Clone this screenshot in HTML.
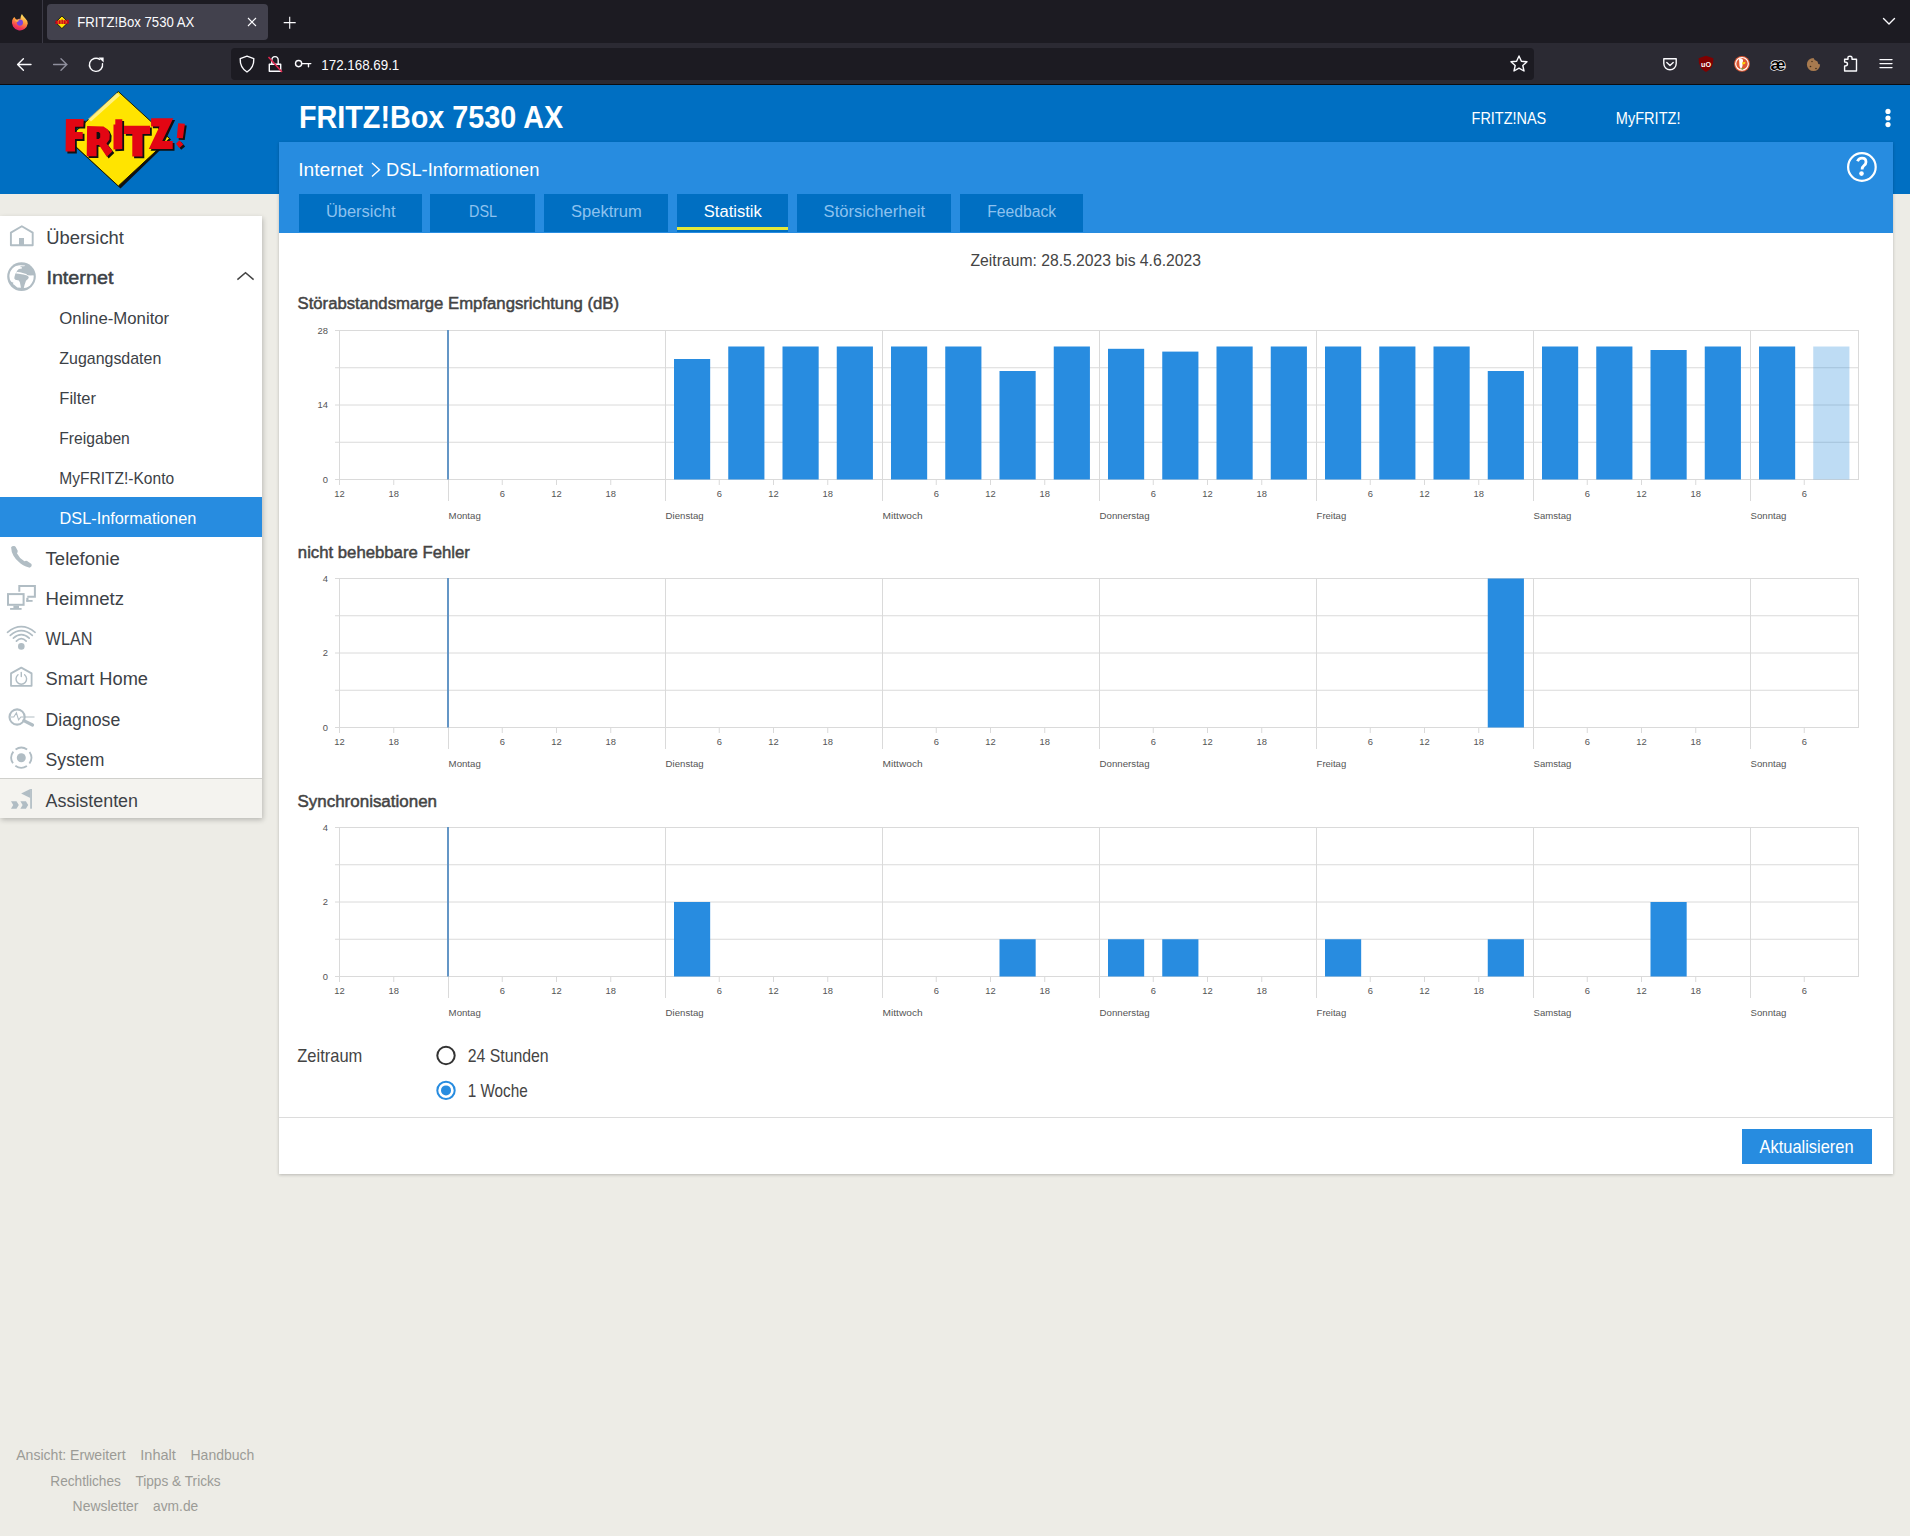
<!DOCTYPE html>
<html><head><meta charset="utf-8"><title>FRITZ!Box 7530 AX</title>
<style>
html,body{margin:0;padding:0;}
body{width:1910px;height:1536px;overflow:hidden;position:relative;background:#edece6;font-family:"Liberation Sans",sans-serif;}
.a{position:absolute;}
svg text{font-family:"Liberation Sans",sans-serif;}
</style></head><body>
<div class="a" style="left:0;top:0;width:1910px;height:43px;background:#1c1b22"></div>
<div class="a" style="left:42px;top:0;width:1px;height:43px;background:#3a3944"></div>
<div class="a" style="left:47px;top:4px;width:221px;height:36px;background:#42414d;border-radius:4px"></div>
<div class="a" style="left:0;top:43px;width:1910px;height:41px;background:#2b2a33"></div>
<div class="a" style="left:231px;top:48px;width:1303px;height:32px;background:#1c1b22;border-radius:4px"></div>
<div class="a" style="left:0;top:84px;width:1910px;height:1px;background:#0c0c10"></div>
<div class="a" style="left:0;top:85px;width:1910px;height:109px;background:#006fc2"></div>
<div class="a" style="left:0;top:216px;width:262px;height:602px;background:#fff;box-shadow:1px 2px 5px rgba(0,0,0,0.22)"></div>
<div class="a" style="left:0;top:497px;width:262px;height:40px;background:#278ce0"></div>
<div class="a" style="left:0;top:778px;width:262px;height:39px;background:#f4f3ef;border-top:1px solid #d0d0cc"></div>
<div class="a" style="left:279px;top:142px;width:1614px;height:1032px;background:#fff;box-shadow:0 1px 3px rgba(0,0,0,0.22)"></div>
<div class="a" style="left:279px;top:142px;width:1614px;height:91px;background:#278ce0"></div>
<div class="a" style="left:299px;top:194px;width:123px;height:38px;background:#006fc2"></div>
<div class="a" style="left:430px;top:194px;width:105px;height:38px;background:#006fc2"></div>
<div class="a" style="left:544px;top:194px;width:124px;height:38px;background:#006fc2"></div>
<div class="a" style="left:677px;top:194px;width:111px;height:38px;background:#006fc2"></div>
<div class="a" style="left:677px;top:227px;width:111px;height:3px;background:#e3e83a"></div>
<div class="a" style="left:797px;top:194px;width:154px;height:38px;background:#006fc2"></div>
<div class="a" style="left:960px;top:194px;width:123px;height:38px;background:#006fc2"></div>
<div class="a" style="left:279px;top:1117px;width:1614px;height:1px;background:#dcdcdc"></div>
<div class="a" style="left:1742px;top:1129px;width:130px;height:35px;background:#278ce0"></div>
<svg class="a" style="left:0;top:0" width="1910" height="1536" viewBox="0 0 1910 1536">
<text x="77.30" y="26.70" font-size="13.81" fill="#fbfbfe" textLength="117.00" lengthAdjust="spacingAndGlyphs">FRITZ!Box 7530 AX</text>
<text x="321.30" y="69.90" font-size="14.83" fill="#fbfbfe" textLength="78.00" lengthAdjust="spacingAndGlyphs">172.168.69.1</text>
<text x="298.90" y="127.60" font-size="30.81" font-weight="bold" fill="#ffffff" textLength="264.40" lengthAdjust="spacingAndGlyphs">FRITZ!Box 7530 AX</text>
<text x="1471.60" y="123.60" font-size="16.57" fill="#ffffff" textLength="74.60" lengthAdjust="spacingAndGlyphs">FRITZ!NAS</text>
<text x="1615.80" y="123.60" font-size="16.57" fill="#ffffff" textLength="64.70" lengthAdjust="spacingAndGlyphs">MyFRITZ!</text>
<text x="298.20" y="175.90" font-size="18.90" fill="#ffffff" textLength="65.00" lengthAdjust="spacingAndGlyphs">Internet</text>
<text x="386.00" y="175.90" font-size="18.90" fill="#ffffff" textLength="153.40" lengthAdjust="spacingAndGlyphs">DSL-Informationen</text>
<path d="M372 163 L379.5 169.7 L372 176.5" fill="none" stroke="#fff" stroke-width="1.4"/>
<text x="325.90" y="216.90" font-size="17.30" fill="#8dc2ef" textLength="69.60" lengthAdjust="spacingAndGlyphs">Übersicht</text>
<text x="469.00" y="216.90" font-size="17.30" fill="#8dc2ef" textLength="28.00" lengthAdjust="spacingAndGlyphs">DSL</text>
<text x="571.00" y="216.90" font-size="17.30" fill="#8dc2ef" textLength="70.80" lengthAdjust="spacingAndGlyphs">Spektrum</text>
<text x="703.80" y="216.90" font-size="17.30" fill="#ffffff" textLength="58.00" lengthAdjust="spacingAndGlyphs">Statistik</text>
<text x="823.60" y="216.90" font-size="17.30" fill="#8dc2ef" textLength="101.40" lengthAdjust="spacingAndGlyphs">Störsicherheit</text>
<text x="987.20" y="216.90" font-size="17.30" fill="#8dc2ef" textLength="69.00" lengthAdjust="spacingAndGlyphs">Feedback</text>
<text x="970.50" y="265.70" font-size="16.72" fill="#444444" textLength="230.50" lengthAdjust="spacingAndGlyphs">Zeitraum: 28.5.2023 bis 4.6.2023</text>
<text x="297.50" y="308.70" font-size="16.86" stroke="#444444" stroke-width="0.5" fill="#444444" textLength="321.50" lengthAdjust="spacingAndGlyphs">Störabstandsmarge Empfangsrichtung (dB)</text>
<text x="297.85" y="557.80" font-size="16.86" stroke="#444444" stroke-width="0.5" fill="#444444" textLength="172.00" lengthAdjust="spacingAndGlyphs">nicht behebbare Fehler</text>
<text x="297.50" y="806.80" font-size="16.86" stroke="#444444" stroke-width="0.5" fill="#444444" textLength="139.50" lengthAdjust="spacingAndGlyphs">Synchronisationen</text>
<text x="297.30" y="1061.80" font-size="17.59" fill="#444444" textLength="65.00" lengthAdjust="spacingAndGlyphs">Zeitraum</text>
<text x="467.70" y="1061.80" font-size="17.59" fill="#444444" textLength="81.00" lengthAdjust="spacingAndGlyphs">24 Stunden</text>
<text x="467.70" y="1096.60" font-size="17.59" fill="#444444" textLength="60.00" lengthAdjust="spacingAndGlyphs">1 Woche</text>
<text x="1759.60" y="1152.90" font-size="17.59" fill="#ffffff" textLength="94.00" lengthAdjust="spacingAndGlyphs">Aktualisieren</text>
<circle cx="446" cy="1055.5" r="8.7" fill="#fff" stroke="#333" stroke-width="2"/>
<circle cx="446" cy="1090.4" r="8.7" fill="#fff" stroke="#278ce0" stroke-width="2"/>
<circle cx="446" cy="1090.4" r="5" fill="#278ce0"/>
<text x="46.30" y="243.80" font-size="18.90" fill="#3c4146" textLength="77.60" lengthAdjust="spacingAndGlyphs">Übersicht</text>
<text x="46.40" y="284.06" font-size="18.90" stroke="#3c4146" stroke-width="0.5" fill="#3c4146" textLength="67.00" lengthAdjust="spacingAndGlyphs">Internet</text>
<text x="59.30" y="323.80" font-size="17.15" fill="#3c4146" textLength="109.90" lengthAdjust="spacingAndGlyphs">Online-Monitor</text>
<text x="59.30" y="363.80" font-size="17.15" fill="#3c4146" textLength="102.00" lengthAdjust="spacingAndGlyphs">Zugangsdaten</text>
<text x="59.30" y="403.80" font-size="17.15" fill="#3c4146" textLength="36.70" lengthAdjust="spacingAndGlyphs">Filter</text>
<text x="59.30" y="443.90" font-size="17.15" fill="#3c4146" textLength="70.50" lengthAdjust="spacingAndGlyphs">Freigaben</text>
<text x="59.30" y="483.90" font-size="17.15" fill="#3c4146" textLength="114.80" lengthAdjust="spacingAndGlyphs">MyFRITZ!-Konto</text>
<text x="59.60" y="524.00" font-size="17.15" fill="#ffffff" textLength="136.70" lengthAdjust="spacingAndGlyphs">DSL-Informationen</text>
<text x="45.60" y="564.60" font-size="18.90" fill="#3c4146" textLength="74.20" lengthAdjust="spacingAndGlyphs">Telefonie</text>
<text x="45.60" y="604.70" font-size="18.90" fill="#3c4146" textLength="78.40" lengthAdjust="spacingAndGlyphs">Heimnetz</text>
<text x="45.60" y="644.80" font-size="18.90" fill="#3c4146" textLength="46.80" lengthAdjust="spacingAndGlyphs">WLAN</text>
<text x="45.60" y="685.00" font-size="18.90" fill="#3c4146" textLength="102.40" lengthAdjust="spacingAndGlyphs">Smart Home</text>
<text x="45.60" y="725.60" font-size="18.90" fill="#3c4146" textLength="74.70" lengthAdjust="spacingAndGlyphs">Diagnose</text>
<text x="45.60" y="765.70" font-size="18.90" fill="#3c4146" textLength="58.70" lengthAdjust="spacingAndGlyphs">System</text>
<text x="45.60" y="806.50" font-size="18.90" fill="#3c4146" textLength="92.40" lengthAdjust="spacingAndGlyphs">Assistenten</text>
<path d="M237.4 279.6 L245.5 272.8 L253.6 279.6" fill="none" stroke="#444" stroke-width="1.5"/>
<text x="16.20" y="1459.80" font-size="15.41" fill="#9b9b96" textLength="109.40" lengthAdjust="spacingAndGlyphs">Ansicht: Erweitert</text>
<text x="140.30" y="1459.80" font-size="15.41" fill="#9b9b96" textLength="35.60" lengthAdjust="spacingAndGlyphs">Inhalt</text>
<text x="190.50" y="1459.80" font-size="15.41" fill="#9b9b96" textLength="63.90" lengthAdjust="spacingAndGlyphs">Handbuch</text>
<text x="50.30" y="1485.80" font-size="15.41" fill="#9b9b96" textLength="70.60" lengthAdjust="spacingAndGlyphs">Rechtliches</text>
<text x="135.40" y="1485.80" font-size="15.41" fill="#9b9b96" textLength="85.30" lengthAdjust="spacingAndGlyphs">Tipps &amp; Tricks</text>
<text x="72.60" y="1510.90" font-size="15.41" fill="#9b9b96" textLength="65.90" lengthAdjust="spacingAndGlyphs">Newsletter</text>
<text x="153.10" y="1510.90" font-size="15.41" fill="#9b9b96" textLength="45.10" lengthAdjust="spacingAndGlyphs">avm.de</text>
<line x1="335" y1="330.50" x2="1859" y2="330.50" stroke="#dadada" stroke-width="1"/>
<line x1="335" y1="367.75" x2="1859" y2="367.75" stroke="#dadada" stroke-width="1"/>
<line x1="335" y1="405.00" x2="1859" y2="405.00" stroke="#dadada" stroke-width="1"/>
<line x1="335" y1="442.25" x2="1859" y2="442.25" stroke="#dadada" stroke-width="1"/>
<line x1="335" y1="479.50" x2="1859" y2="479.50" stroke="#dadada" stroke-width="1"/>
<rect x="674.00" y="359.00" width="36.17" height="120.50" fill="#288ce0"/>
<rect x="728.25" y="346.50" width="36.17" height="133.00" fill="#288ce0"/>
<rect x="782.50" y="346.50" width="36.17" height="133.00" fill="#288ce0"/>
<rect x="836.75" y="346.50" width="36.17" height="133.00" fill="#288ce0"/>
<rect x="891.00" y="346.50" width="36.17" height="133.00" fill="#288ce0"/>
<rect x="945.25" y="346.50" width="36.17" height="133.00" fill="#288ce0"/>
<rect x="999.50" y="371.00" width="36.17" height="108.50" fill="#288ce0"/>
<rect x="1053.75" y="346.50" width="36.17" height="133.00" fill="#288ce0"/>
<rect x="1108.00" y="348.80" width="36.17" height="130.70" fill="#288ce0"/>
<rect x="1162.25" y="351.60" width="36.17" height="127.90" fill="#288ce0"/>
<rect x="1216.50" y="346.50" width="36.17" height="133.00" fill="#288ce0"/>
<rect x="1270.75" y="346.50" width="36.17" height="133.00" fill="#288ce0"/>
<rect x="1325.00" y="346.50" width="36.17" height="133.00" fill="#288ce0"/>
<rect x="1379.25" y="346.50" width="36.17" height="133.00" fill="#288ce0"/>
<rect x="1433.50" y="346.50" width="36.17" height="133.00" fill="#288ce0"/>
<rect x="1487.75" y="371.00" width="36.17" height="108.50" fill="#288ce0"/>
<rect x="1542.00" y="346.50" width="36.17" height="133.00" fill="#288ce0"/>
<rect x="1596.25" y="346.50" width="36.17" height="133.00" fill="#288ce0"/>
<rect x="1650.50" y="350.00" width="36.17" height="129.50" fill="#288ce0"/>
<rect x="1704.75" y="346.50" width="36.17" height="133.00" fill="#288ce0"/>
<rect x="1759.00" y="346.50" width="36.17" height="133.00" fill="#288ce0"/>
<rect x="1813.25" y="346.50" width="36.17" height="133.00" fill="rgba(39,139,220,0.3)"/>
<line x1="339.5" y1="330" x2="339.5" y2="485" stroke="#dadada" stroke-width="1"/>
<line x1="1858.5" y1="330" x2="1858.5" y2="480" stroke="#dadada" stroke-width="1"/>
<line x1="448.5" y1="479" x2="448.5" y2="501" stroke="#dadada" stroke-width="1"/>
<rect x="447" y="330" width="2" height="149.5" fill="#6496c6"/>
<text x="448.60" y="519.00" font-size="9.60" fill="#555555" textLength="32.20" lengthAdjust="spacingAndGlyphs">Montag</text>
<line x1="665.5" y1="330" x2="665.5" y2="501" stroke="#dadada" stroke-width="1"/>
<text x="665.60" y="519.00" font-size="9.60" fill="#555555" textLength="38.00" lengthAdjust="spacingAndGlyphs">Dienstag</text>
<line x1="882.5" y1="330" x2="882.5" y2="501" stroke="#dadada" stroke-width="1"/>
<text x="882.60" y="519.00" font-size="9.60" fill="#555555" textLength="40.00" lengthAdjust="spacingAndGlyphs">Mittwoch</text>
<line x1="1099.5" y1="330" x2="1099.5" y2="501" stroke="#dadada" stroke-width="1"/>
<text x="1099.60" y="519.00" font-size="9.60" fill="#555555" textLength="50.00" lengthAdjust="spacingAndGlyphs">Donnerstag</text>
<line x1="1316.5" y1="330" x2="1316.5" y2="501" stroke="#dadada" stroke-width="1"/>
<text x="1316.60" y="519.00" font-size="9.60" fill="#555555" textLength="29.60" lengthAdjust="spacingAndGlyphs">Freitag</text>
<line x1="1533.5" y1="330" x2="1533.5" y2="501" stroke="#dadada" stroke-width="1"/>
<text x="1533.60" y="519.00" font-size="9.60" fill="#555555" textLength="37.70" lengthAdjust="spacingAndGlyphs">Samstag</text>
<line x1="1750.5" y1="330" x2="1750.5" y2="501" stroke="#dadada" stroke-width="1"/>
<text x="1750.60" y="519.00" font-size="9.60" fill="#555555" textLength="35.80" lengthAdjust="spacingAndGlyphs">Sonntag</text>
<text x="339.50" y="497.00" font-size="9.40" fill="#555555" text-anchor="middle">12</text>
<line x1="393.75" y1="479" x2="393.75" y2="485" stroke="#dadada" stroke-width="1"/>
<text x="393.75" y="497.00" font-size="9.40" fill="#555555" text-anchor="middle">18</text>
<line x1="502.25" y1="479" x2="502.25" y2="485" stroke="#dadada" stroke-width="1"/>
<text x="502.25" y="497.00" font-size="9.40" fill="#555555" text-anchor="middle">6</text>
<line x1="556.50" y1="479" x2="556.50" y2="485" stroke="#dadada" stroke-width="1"/>
<text x="556.50" y="497.00" font-size="9.40" fill="#555555" text-anchor="middle">12</text>
<line x1="610.75" y1="479" x2="610.75" y2="485" stroke="#dadada" stroke-width="1"/>
<text x="610.75" y="497.00" font-size="9.40" fill="#555555" text-anchor="middle">18</text>
<line x1="719.25" y1="479" x2="719.25" y2="485" stroke="#dadada" stroke-width="1"/>
<text x="719.25" y="497.00" font-size="9.40" fill="#555555" text-anchor="middle">6</text>
<line x1="773.50" y1="479" x2="773.50" y2="485" stroke="#dadada" stroke-width="1"/>
<text x="773.50" y="497.00" font-size="9.40" fill="#555555" text-anchor="middle">12</text>
<line x1="827.75" y1="479" x2="827.75" y2="485" stroke="#dadada" stroke-width="1"/>
<text x="827.75" y="497.00" font-size="9.40" fill="#555555" text-anchor="middle">18</text>
<line x1="936.25" y1="479" x2="936.25" y2="485" stroke="#dadada" stroke-width="1"/>
<text x="936.25" y="497.00" font-size="9.40" fill="#555555" text-anchor="middle">6</text>
<line x1="990.50" y1="479" x2="990.50" y2="485" stroke="#dadada" stroke-width="1"/>
<text x="990.50" y="497.00" font-size="9.40" fill="#555555" text-anchor="middle">12</text>
<line x1="1044.75" y1="479" x2="1044.75" y2="485" stroke="#dadada" stroke-width="1"/>
<text x="1044.75" y="497.00" font-size="9.40" fill="#555555" text-anchor="middle">18</text>
<line x1="1153.25" y1="479" x2="1153.25" y2="485" stroke="#dadada" stroke-width="1"/>
<text x="1153.25" y="497.00" font-size="9.40" fill="#555555" text-anchor="middle">6</text>
<line x1="1207.50" y1="479" x2="1207.50" y2="485" stroke="#dadada" stroke-width="1"/>
<text x="1207.50" y="497.00" font-size="9.40" fill="#555555" text-anchor="middle">12</text>
<line x1="1261.75" y1="479" x2="1261.75" y2="485" stroke="#dadada" stroke-width="1"/>
<text x="1261.75" y="497.00" font-size="9.40" fill="#555555" text-anchor="middle">18</text>
<line x1="1370.25" y1="479" x2="1370.25" y2="485" stroke="#dadada" stroke-width="1"/>
<text x="1370.25" y="497.00" font-size="9.40" fill="#555555" text-anchor="middle">6</text>
<line x1="1424.50" y1="479" x2="1424.50" y2="485" stroke="#dadada" stroke-width="1"/>
<text x="1424.50" y="497.00" font-size="9.40" fill="#555555" text-anchor="middle">12</text>
<line x1="1478.75" y1="479" x2="1478.75" y2="485" stroke="#dadada" stroke-width="1"/>
<text x="1478.75" y="497.00" font-size="9.40" fill="#555555" text-anchor="middle">18</text>
<line x1="1587.25" y1="479" x2="1587.25" y2="485" stroke="#dadada" stroke-width="1"/>
<text x="1587.25" y="497.00" font-size="9.40" fill="#555555" text-anchor="middle">6</text>
<line x1="1641.50" y1="479" x2="1641.50" y2="485" stroke="#dadada" stroke-width="1"/>
<text x="1641.50" y="497.00" font-size="9.40" fill="#555555" text-anchor="middle">12</text>
<line x1="1695.75" y1="479" x2="1695.75" y2="485" stroke="#dadada" stroke-width="1"/>
<text x="1695.75" y="497.00" font-size="9.40" fill="#555555" text-anchor="middle">18</text>
<line x1="1804.25" y1="479" x2="1804.25" y2="485" stroke="#dadada" stroke-width="1"/>
<text x="1804.25" y="497.00" font-size="9.40" fill="#555555" text-anchor="middle">6</text>
<text x="328.00" y="333.60" font-size="9.40" fill="#555555" text-anchor="end">28</text>
<text x="328.00" y="408.10" font-size="9.40" fill="#555555" text-anchor="end">14</text>
<text x="328.00" y="482.60" font-size="9.40" fill="#555555" text-anchor="end">0</text>
<line x1="335" y1="578.50" x2="1859" y2="578.50" stroke="#dadada" stroke-width="1"/>
<line x1="335" y1="615.75" x2="1859" y2="615.75" stroke="#dadada" stroke-width="1"/>
<line x1="335" y1="653.00" x2="1859" y2="653.00" stroke="#dadada" stroke-width="1"/>
<line x1="335" y1="690.25" x2="1859" y2="690.25" stroke="#dadada" stroke-width="1"/>
<line x1="335" y1="727.50" x2="1859" y2="727.50" stroke="#dadada" stroke-width="1"/>
<rect x="1487.75" y="578.50" width="36.17" height="149.00" fill="#288ce0"/>
<line x1="339.5" y1="578" x2="339.5" y2="733" stroke="#dadada" stroke-width="1"/>
<line x1="1858.5" y1="578" x2="1858.5" y2="728" stroke="#dadada" stroke-width="1"/>
<line x1="448.5" y1="727" x2="448.5" y2="749" stroke="#dadada" stroke-width="1"/>
<rect x="447" y="578" width="2" height="149.5" fill="#6496c6"/>
<text x="448.60" y="767.00" font-size="9.60" fill="#555555" textLength="32.20" lengthAdjust="spacingAndGlyphs">Montag</text>
<line x1="665.5" y1="578" x2="665.5" y2="749" stroke="#dadada" stroke-width="1"/>
<text x="665.60" y="767.00" font-size="9.60" fill="#555555" textLength="38.00" lengthAdjust="spacingAndGlyphs">Dienstag</text>
<line x1="882.5" y1="578" x2="882.5" y2="749" stroke="#dadada" stroke-width="1"/>
<text x="882.60" y="767.00" font-size="9.60" fill="#555555" textLength="40.00" lengthAdjust="spacingAndGlyphs">Mittwoch</text>
<line x1="1099.5" y1="578" x2="1099.5" y2="749" stroke="#dadada" stroke-width="1"/>
<text x="1099.60" y="767.00" font-size="9.60" fill="#555555" textLength="50.00" lengthAdjust="spacingAndGlyphs">Donnerstag</text>
<line x1="1316.5" y1="578" x2="1316.5" y2="749" stroke="#dadada" stroke-width="1"/>
<text x="1316.60" y="767.00" font-size="9.60" fill="#555555" textLength="29.60" lengthAdjust="spacingAndGlyphs">Freitag</text>
<line x1="1533.5" y1="578" x2="1533.5" y2="749" stroke="#dadada" stroke-width="1"/>
<text x="1533.60" y="767.00" font-size="9.60" fill="#555555" textLength="37.70" lengthAdjust="spacingAndGlyphs">Samstag</text>
<line x1="1750.5" y1="578" x2="1750.5" y2="749" stroke="#dadada" stroke-width="1"/>
<text x="1750.60" y="767.00" font-size="9.60" fill="#555555" textLength="35.80" lengthAdjust="spacingAndGlyphs">Sonntag</text>
<text x="339.50" y="745.00" font-size="9.40" fill="#555555" text-anchor="middle">12</text>
<line x1="393.75" y1="727" x2="393.75" y2="733" stroke="#dadada" stroke-width="1"/>
<text x="393.75" y="745.00" font-size="9.40" fill="#555555" text-anchor="middle">18</text>
<line x1="502.25" y1="727" x2="502.25" y2="733" stroke="#dadada" stroke-width="1"/>
<text x="502.25" y="745.00" font-size="9.40" fill="#555555" text-anchor="middle">6</text>
<line x1="556.50" y1="727" x2="556.50" y2="733" stroke="#dadada" stroke-width="1"/>
<text x="556.50" y="745.00" font-size="9.40" fill="#555555" text-anchor="middle">12</text>
<line x1="610.75" y1="727" x2="610.75" y2="733" stroke="#dadada" stroke-width="1"/>
<text x="610.75" y="745.00" font-size="9.40" fill="#555555" text-anchor="middle">18</text>
<line x1="719.25" y1="727" x2="719.25" y2="733" stroke="#dadada" stroke-width="1"/>
<text x="719.25" y="745.00" font-size="9.40" fill="#555555" text-anchor="middle">6</text>
<line x1="773.50" y1="727" x2="773.50" y2="733" stroke="#dadada" stroke-width="1"/>
<text x="773.50" y="745.00" font-size="9.40" fill="#555555" text-anchor="middle">12</text>
<line x1="827.75" y1="727" x2="827.75" y2="733" stroke="#dadada" stroke-width="1"/>
<text x="827.75" y="745.00" font-size="9.40" fill="#555555" text-anchor="middle">18</text>
<line x1="936.25" y1="727" x2="936.25" y2="733" stroke="#dadada" stroke-width="1"/>
<text x="936.25" y="745.00" font-size="9.40" fill="#555555" text-anchor="middle">6</text>
<line x1="990.50" y1="727" x2="990.50" y2="733" stroke="#dadada" stroke-width="1"/>
<text x="990.50" y="745.00" font-size="9.40" fill="#555555" text-anchor="middle">12</text>
<line x1="1044.75" y1="727" x2="1044.75" y2="733" stroke="#dadada" stroke-width="1"/>
<text x="1044.75" y="745.00" font-size="9.40" fill="#555555" text-anchor="middle">18</text>
<line x1="1153.25" y1="727" x2="1153.25" y2="733" stroke="#dadada" stroke-width="1"/>
<text x="1153.25" y="745.00" font-size="9.40" fill="#555555" text-anchor="middle">6</text>
<line x1="1207.50" y1="727" x2="1207.50" y2="733" stroke="#dadada" stroke-width="1"/>
<text x="1207.50" y="745.00" font-size="9.40" fill="#555555" text-anchor="middle">12</text>
<line x1="1261.75" y1="727" x2="1261.75" y2="733" stroke="#dadada" stroke-width="1"/>
<text x="1261.75" y="745.00" font-size="9.40" fill="#555555" text-anchor="middle">18</text>
<line x1="1370.25" y1="727" x2="1370.25" y2="733" stroke="#dadada" stroke-width="1"/>
<text x="1370.25" y="745.00" font-size="9.40" fill="#555555" text-anchor="middle">6</text>
<line x1="1424.50" y1="727" x2="1424.50" y2="733" stroke="#dadada" stroke-width="1"/>
<text x="1424.50" y="745.00" font-size="9.40" fill="#555555" text-anchor="middle">12</text>
<line x1="1478.75" y1="727" x2="1478.75" y2="733" stroke="#dadada" stroke-width="1"/>
<text x="1478.75" y="745.00" font-size="9.40" fill="#555555" text-anchor="middle">18</text>
<line x1="1587.25" y1="727" x2="1587.25" y2="733" stroke="#dadada" stroke-width="1"/>
<text x="1587.25" y="745.00" font-size="9.40" fill="#555555" text-anchor="middle">6</text>
<line x1="1641.50" y1="727" x2="1641.50" y2="733" stroke="#dadada" stroke-width="1"/>
<text x="1641.50" y="745.00" font-size="9.40" fill="#555555" text-anchor="middle">12</text>
<line x1="1695.75" y1="727" x2="1695.75" y2="733" stroke="#dadada" stroke-width="1"/>
<text x="1695.75" y="745.00" font-size="9.40" fill="#555555" text-anchor="middle">18</text>
<line x1="1804.25" y1="727" x2="1804.25" y2="733" stroke="#dadada" stroke-width="1"/>
<text x="1804.25" y="745.00" font-size="9.40" fill="#555555" text-anchor="middle">6</text>
<text x="328.00" y="581.60" font-size="9.40" fill="#555555" text-anchor="end">4</text>
<text x="328.00" y="656.10" font-size="9.40" fill="#555555" text-anchor="end">2</text>
<text x="328.00" y="730.60" font-size="9.40" fill="#555555" text-anchor="end">0</text>
<line x1="335" y1="827.50" x2="1859" y2="827.50" stroke="#dadada" stroke-width="1"/>
<line x1="335" y1="864.75" x2="1859" y2="864.75" stroke="#dadada" stroke-width="1"/>
<line x1="335" y1="902.00" x2="1859" y2="902.00" stroke="#dadada" stroke-width="1"/>
<line x1="335" y1="939.25" x2="1859" y2="939.25" stroke="#dadada" stroke-width="1"/>
<line x1="335" y1="976.50" x2="1859" y2="976.50" stroke="#dadada" stroke-width="1"/>
<rect x="674.00" y="902.00" width="36.17" height="74.50" fill="#288ce0"/>
<rect x="999.50" y="939.25" width="36.17" height="37.25" fill="#288ce0"/>
<rect x="1108.00" y="939.25" width="36.17" height="37.25" fill="#288ce0"/>
<rect x="1162.25" y="939.25" width="36.17" height="37.25" fill="#288ce0"/>
<rect x="1325.00" y="939.25" width="36.17" height="37.25" fill="#288ce0"/>
<rect x="1487.75" y="939.25" width="36.17" height="37.25" fill="#288ce0"/>
<rect x="1650.50" y="902.00" width="36.17" height="74.50" fill="#288ce0"/>
<line x1="339.5" y1="827" x2="339.5" y2="982" stroke="#dadada" stroke-width="1"/>
<line x1="1858.5" y1="827" x2="1858.5" y2="977" stroke="#dadada" stroke-width="1"/>
<line x1="448.5" y1="976" x2="448.5" y2="998" stroke="#dadada" stroke-width="1"/>
<rect x="447" y="827" width="2" height="149.5" fill="#6496c6"/>
<text x="448.60" y="1016.00" font-size="9.60" fill="#555555" textLength="32.20" lengthAdjust="spacingAndGlyphs">Montag</text>
<line x1="665.5" y1="827" x2="665.5" y2="998" stroke="#dadada" stroke-width="1"/>
<text x="665.60" y="1016.00" font-size="9.60" fill="#555555" textLength="38.00" lengthAdjust="spacingAndGlyphs">Dienstag</text>
<line x1="882.5" y1="827" x2="882.5" y2="998" stroke="#dadada" stroke-width="1"/>
<text x="882.60" y="1016.00" font-size="9.60" fill="#555555" textLength="40.00" lengthAdjust="spacingAndGlyphs">Mittwoch</text>
<line x1="1099.5" y1="827" x2="1099.5" y2="998" stroke="#dadada" stroke-width="1"/>
<text x="1099.60" y="1016.00" font-size="9.60" fill="#555555" textLength="50.00" lengthAdjust="spacingAndGlyphs">Donnerstag</text>
<line x1="1316.5" y1="827" x2="1316.5" y2="998" stroke="#dadada" stroke-width="1"/>
<text x="1316.60" y="1016.00" font-size="9.60" fill="#555555" textLength="29.60" lengthAdjust="spacingAndGlyphs">Freitag</text>
<line x1="1533.5" y1="827" x2="1533.5" y2="998" stroke="#dadada" stroke-width="1"/>
<text x="1533.60" y="1016.00" font-size="9.60" fill="#555555" textLength="37.70" lengthAdjust="spacingAndGlyphs">Samstag</text>
<line x1="1750.5" y1="827" x2="1750.5" y2="998" stroke="#dadada" stroke-width="1"/>
<text x="1750.60" y="1016.00" font-size="9.60" fill="#555555" textLength="35.80" lengthAdjust="spacingAndGlyphs">Sonntag</text>
<text x="339.50" y="994.00" font-size="9.40" fill="#555555" text-anchor="middle">12</text>
<line x1="393.75" y1="976" x2="393.75" y2="982" stroke="#dadada" stroke-width="1"/>
<text x="393.75" y="994.00" font-size="9.40" fill="#555555" text-anchor="middle">18</text>
<line x1="502.25" y1="976" x2="502.25" y2="982" stroke="#dadada" stroke-width="1"/>
<text x="502.25" y="994.00" font-size="9.40" fill="#555555" text-anchor="middle">6</text>
<line x1="556.50" y1="976" x2="556.50" y2="982" stroke="#dadada" stroke-width="1"/>
<text x="556.50" y="994.00" font-size="9.40" fill="#555555" text-anchor="middle">12</text>
<line x1="610.75" y1="976" x2="610.75" y2="982" stroke="#dadada" stroke-width="1"/>
<text x="610.75" y="994.00" font-size="9.40" fill="#555555" text-anchor="middle">18</text>
<line x1="719.25" y1="976" x2="719.25" y2="982" stroke="#dadada" stroke-width="1"/>
<text x="719.25" y="994.00" font-size="9.40" fill="#555555" text-anchor="middle">6</text>
<line x1="773.50" y1="976" x2="773.50" y2="982" stroke="#dadada" stroke-width="1"/>
<text x="773.50" y="994.00" font-size="9.40" fill="#555555" text-anchor="middle">12</text>
<line x1="827.75" y1="976" x2="827.75" y2="982" stroke="#dadada" stroke-width="1"/>
<text x="827.75" y="994.00" font-size="9.40" fill="#555555" text-anchor="middle">18</text>
<line x1="936.25" y1="976" x2="936.25" y2="982" stroke="#dadada" stroke-width="1"/>
<text x="936.25" y="994.00" font-size="9.40" fill="#555555" text-anchor="middle">6</text>
<line x1="990.50" y1="976" x2="990.50" y2="982" stroke="#dadada" stroke-width="1"/>
<text x="990.50" y="994.00" font-size="9.40" fill="#555555" text-anchor="middle">12</text>
<line x1="1044.75" y1="976" x2="1044.75" y2="982" stroke="#dadada" stroke-width="1"/>
<text x="1044.75" y="994.00" font-size="9.40" fill="#555555" text-anchor="middle">18</text>
<line x1="1153.25" y1="976" x2="1153.25" y2="982" stroke="#dadada" stroke-width="1"/>
<text x="1153.25" y="994.00" font-size="9.40" fill="#555555" text-anchor="middle">6</text>
<line x1="1207.50" y1="976" x2="1207.50" y2="982" stroke="#dadada" stroke-width="1"/>
<text x="1207.50" y="994.00" font-size="9.40" fill="#555555" text-anchor="middle">12</text>
<line x1="1261.75" y1="976" x2="1261.75" y2="982" stroke="#dadada" stroke-width="1"/>
<text x="1261.75" y="994.00" font-size="9.40" fill="#555555" text-anchor="middle">18</text>
<line x1="1370.25" y1="976" x2="1370.25" y2="982" stroke="#dadada" stroke-width="1"/>
<text x="1370.25" y="994.00" font-size="9.40" fill="#555555" text-anchor="middle">6</text>
<line x1="1424.50" y1="976" x2="1424.50" y2="982" stroke="#dadada" stroke-width="1"/>
<text x="1424.50" y="994.00" font-size="9.40" fill="#555555" text-anchor="middle">12</text>
<line x1="1478.75" y1="976" x2="1478.75" y2="982" stroke="#dadada" stroke-width="1"/>
<text x="1478.75" y="994.00" font-size="9.40" fill="#555555" text-anchor="middle">18</text>
<line x1="1587.25" y1="976" x2="1587.25" y2="982" stroke="#dadada" stroke-width="1"/>
<text x="1587.25" y="994.00" font-size="9.40" fill="#555555" text-anchor="middle">6</text>
<line x1="1641.50" y1="976" x2="1641.50" y2="982" stroke="#dadada" stroke-width="1"/>
<text x="1641.50" y="994.00" font-size="9.40" fill="#555555" text-anchor="middle">12</text>
<line x1="1695.75" y1="976" x2="1695.75" y2="982" stroke="#dadada" stroke-width="1"/>
<text x="1695.75" y="994.00" font-size="9.40" fill="#555555" text-anchor="middle">18</text>
<line x1="1804.25" y1="976" x2="1804.25" y2="982" stroke="#dadada" stroke-width="1"/>
<text x="1804.25" y="994.00" font-size="9.40" fill="#555555" text-anchor="middle">6</text>
<text x="328.00" y="830.60" font-size="9.40" fill="#555555" text-anchor="end">4</text>
<text x="328.00" y="905.10" font-size="9.40" fill="#555555" text-anchor="end">2</text>
<text x="328.00" y="979.60" font-size="9.40" fill="#555555" text-anchor="end">0</text>
<g fill="none" stroke="#b1bdc4" stroke-width="1.9" stroke-linejoin="round">
<path d="M10.9 245.3 V232.6 L21.8 226.3 L32.7 232.6 V245.3 Z"/>
</g>
<rect x="19" y="238" width="5" height="7.5" fill="#b1bdc4"/>
<defs><clipPath id="gclip"><circle cx="21.5" cy="276.6" r="12.2"/></clipPath></defs>
<circle cx="21.5" cy="276.6" r="14.3" fill="#b1bdc4"/>
<g fill="#fff" clip-path="url(#gclip)">
<path d="M16.1 265.8 L20.1 265.2 L25.4 265.5 L24.2 266.3 L21.3 266.3 L19.7 267.1 L21.9 267.3 L21.9 268.5 L18.9 268.9 L17.3 270.5 L16.3 272.3 L15.3 274.1 L14.5 276.7 L14.3 278.6 L15.3 279.8 L18.9 280.4 L19.9 282.4 L20.5 285.2 L20.9 287.8 L17.3 287.4 L14.1 284.8 L12.9 284.0 L13.5 282.8 L11.2 281.8 L9.6 279.2 L9.0 275.1 L10.0 270.7 L12.5 267.7 Z"/>
<path d="M16.3 272.3 L17.3 272.0 L20.1 272.2 L22.8 272.9 L26.2 274.1 L28.0 275.7 L26.2 275.3 L23.2 274.5 L18.5 273.8 L16.1 273.6 Z"/>
<path d="M28.8 277.1 L26.2 274.4 L28.0 275.3 L30.6 275.6 L34.3 275.1 L34.3 279.2 L32.6 284.2 L28.2 287.6 L23.8 288.0 L24.6 284.8 L26.0 280.8 L28.2 278.8 Z"/>
</g>
<path d="M11.1 547.2 Q12 546 14 546.1 Q15.2 546.2 15.7 547 L17.7 550.7 Q17.9 552.3 16.9 553.2 Q19.5 558.5 24.4 561.2 Q25.7 560.4 27.1 560.9 L31.5 564 Q32 565.8 31.3 566.5 Q30.3 567.8 29 567.6 Q22.5 566 18.9 562.1 Q14.8 558.3 13.5 555.8 Q11.2 551.5 11.1 547.2 Z" fill="#b1bdc4"/>
<g fill="none" stroke="#b1bdc4" stroke-width="2">
<rect x="8" y="594.1" width="15.6" height="10.7"/>
<path d="M19.3 591.7 V586.1 H34.9 V596.8 H27.3"/>
</g>
<g fill="#b1bdc4">
<rect x="13.4" y="605.8" width="5.6" height="2.6"/><rect x="10.1" y="608" width="11.5" height="1.8"/>
<rect x="26.3" y="597.8" width="2.2" height="3.9"/><rect x="26.3" y="600" width="6.3" height="1.8"/>
</g>
<g fill="none" stroke="#b1bdc4" stroke-width="1.7" stroke-linecap="round">
<path d="M16.4 641.2 Q21.3 636 26.2 641.2"/>
<path d="M13.4 638.2 Q21.3 631.2 29.2 638.2"/>
<path d="M10.3 635.4 Q21.3 626 32.3 635.4"/>
<path d="M7.5 632.3 Q21.3 621.1 35.1 632.3"/>
</g>
<circle cx="21.3" cy="646.4" r="3.3" fill="#b1bdc4"/>
<g fill="none" stroke="#b1bdc4" stroke-width="1.8" stroke-linejoin="round">
<path d="M11 685.8 V673.4 L21.3 667.6 L31.6 673.4 V685.8 Z"/>
</g>
<g fill="none" stroke="#b1bdc4" stroke-width="1.4" stroke-linecap="round">
<path d="M18 674.8 A5.3 5.3 0 1 0 24.6 674.8"/>
<path d="M21.3 672.5 V676.5"/>
</g>
<circle cx="17.1" cy="717" r="7.6" fill="none" stroke="#b1bdc4" stroke-width="2.1"/>
<path d="M23.8 720.6 L32.5 725" stroke="#b1bdc4" stroke-width="3.2" stroke-linecap="round"/>
<path d="M11 717 H13.8 L16.4 712.8 L18.6 719.8 L20.9 717 H34.5" fill="none" stroke="#b1bdc4" stroke-width="1.1"/>
<circle cx="21.3" cy="757.7" r="4.5" fill="#b1bdc4"/>
<circle cx="21.3" cy="757.7" r="10" fill="none" stroke="#b1bdc4" stroke-width="1.8" stroke-dasharray="12.2 3.5" transform="rotate(-125 21.3 757.7)"/>
<g fill="#b1bdc4">
<rect x="30.2" y="789" width="1.7" height="19.7"/>
<path d="M21.1 793.5 L30.3 789 L30.3 797.9 Z"/>
<path d="M11 801.2 H16.5 L18.8 805 L16.5 808.7 H11 L13.2 805 Z"/>
<path d="M20.4 801.2 H25.9 L28.2 805 L25.9 808.7 H20.4 L22.6 805 Z"/>
</g>

<circle cx="1888" cy="111.4" r="2.6" fill="#fff"/><circle cx="1888" cy="118" r="2.6" fill="#fff"/><circle cx="1888" cy="124.6" r="2.6" fill="#fff"/>
<circle cx="1861.9" cy="167" r="13.8" fill="none" stroke="#fff" stroke-width="2.2"/>
<path d="M1857.5 161.3 Q1858.8 158.2 1862 158.2 Q1866 158.2 1866 162 Q1866 164.2 1863.9 165.6 Q1862.1 166.9 1862.1 169.6" fill="none" stroke="#fff" stroke-width="2.8"/>
<circle cx="1861.5" cy="173.6" r="2.3" fill="#fff"/>
<g>
<path d="M118.5 93.5 L171 139.5 L120.5 188.5 L69.5 141.5 Z" fill="#111" />
<path d="M118.3 91.5 L169.5 138.5 L118.3 186 L67.5 139 Z" fill="#ffe400" stroke="#1a1a00" stroke-width="1"/>
<path d="M88 119 L117 92.8 L120 95.5 L91 121.5 Z" fill="#fff6a8" opacity="0.75"/>
<g fill="#111" transform="translate(1.8 1.8)">
<path d="M65.9 119 H83.8 L83.4 126.7 H75 V132 H82.7 V139.1 H75 V151.6 H65.6 Z"/>
<path d="M87.1 125.9 L103.5 126.5 L107.8 129.5 L109.8 134 L109.5 139.5 L106.5 143.5 L112.5 151.3 L106.8 156.8 L99 145 H96.6 V156.3 H86.7 Z"/>
<path d="M115.3 119.3 H122.3 V149 L113.5 149.4 V124.5 H115.3 Z"/>
<path d="M124 125.7 H150 V134 H142.5 V156.4 H132.3 V134 H124 Z"/>
<path d="M151.1 118.3 H173.3 L162.3 141.1 H172.7 V148.9 H148.8 L159.5 126.5 H151.1 Z"/>
<path d="M178.2 123.2 L184.9 123.8 L182.9 138.3 L176.8 137.9 Z"/>
<path d="M179.4 140.3 L183.3 144.6 L179.4 148 L176 143.8 Z"/>
</g>
<g fill="#e30613">
<path d="M65.9 119 H83.8 L83.4 126.7 H75 V132 H82.7 V139.1 H75 V151.6 H65.6 Z"/>
<path fill-rule="evenodd" d="M87.1 125.9 L103.5 126.5 L107.8 129.5 L109.8 134 L109.5 139.5 L106.5 143.5 L112.5 151.3 L106.8 156.8 L99 145 H96.6 V156.3 H86.7 Z M96.6 132 H98.8 L100.2 133.5 V137.5 L98.8 138.9 H96.6 Z"/>
<path d="M115.3 119.3 H122.3 V149 L113.5 149.4 V124.5 H115.3 Z"/>
<path d="M124 125.7 H150 V134 H142.5 V156.4 H132.3 V134 H124 Z"/>
<path d="M151.1 118.3 H173.3 L162.3 141.1 H172.7 V148.9 H148.8 L159.5 126.5 H151.1 Z"/>
<path d="M178.2 123.2 L184.9 123.8 L182.9 138.3 L176.8 137.9 Z"/>
<path d="M179.4 140.3 L183.3 144.6 L179.4 148 L176 143.8 Z"/>
</g>
</g>
<g fill="none" stroke="#fbfbfe" stroke-width="1.4" stroke-linecap="round" stroke-linejoin="round">
<path d="M31 64.5 H17.6 M23.4 58.8 L17.6 64.5 L23.4 70.3"/>
<path d="M1.5 0" />

<path d="M1883.5 18.5 L1889 24 L1894.5 18.5"/>
<path d="M102.5 63.6 A6.6 6.6 0 1 1 99.8 59.4"/>
<path d="M247 56.2 L253.8 58.6 Q254.2 67.5 247 72 Q239.8 67.5 240.2 58.6 Z"/>
<path d="M269.3 64.2 H280.7 V71.3 H269.3 Z M271.8 64.2 V60.5 Q271.8 56.6 275 56.6 Q278.2 56.6 278.2 60.5 V64.2"/>
<circle cx="298.6" cy="63.6" r="3.1"/>
<path d="M301.7 63.6 H310.8 M308.5 63.6 V66.8"/>
<path d="M1519 56 L1521.4 61.2 L1527 61.8 L1522.8 65.5 L1524 71 L1519 68.2 L1514 71 L1515.2 65.5 L1511 61.8 L1516.6 61.2 Z"/>
<path d="M1663.8 58.8 H1676.2 V63.5 A6.2 6.2 0 0 1 1663.8 63.5 Z M1666.8 62.5 L1670 65.5 L1673.2 62.5"/>
<path d="M1848 57 Q1848 56.2 1850 56.2 Q1852 56.2 1852 57.5 V59.3 H1856.5 V71 H1844.6 V66 Q1847.5 66 1847.5 64 Q1847.5 62 1844.6 62 V59.3 H1848 Z"/>
<path d="M1880 59.6 H1892 M1880 63.6 H1892 M1880 67.6 H1892"/>
</g>
<path d="M248 18 L256 26 M256 18 L248 26 M283.7 22.6 H295.7 M289.7 16.8 V28.8" fill="none" stroke="#fbfbfe" stroke-width="1.1"/>
<path d="M67 64.5 H53.6 M61 58.8 L66.8 64.5 L61 70.3" fill="none" stroke="#8f8f9d" stroke-width="1.4" stroke-linecap="round" stroke-linejoin="round"/>
<path d="M98.6 57.5 L103.6 57.5 L103.6 62.5 Z" fill="#fbfbfe"/>
<path d="M268.5 57 L282 72" stroke="#e22850" stroke-width="1.5"/>
<path d="M1698.6 58.3 L1706 55.8 L1713.4 58.3 Q1713.8 68 1706 72 Q1698.2 68 1698.6 58.3 Z" fill="#800000"/>
<text x="1706" y="67" font-size="7.5" font-weight="bold" fill="#fff" text-anchor="middle" textLength="10" lengthAdjust="spacingAndGlyphs">uO</text>
<circle cx="1742" cy="63.8" r="7.9" fill="#de5833"/>
<circle cx="1742" cy="63.8" r="6.3" fill="none" stroke="#fff" stroke-width="1.2"/>
<path d="M1739 58.5 Q1742 57.5 1743 60 L1742.5 66 L1741 69.5 L1739.5 66 Z" fill="#fff"/>
<path d="M1742 62.5 L1745.5 61.8 L1745 64 L1742.5 64.5 Z" fill="#fdd20a"/>
<path d="M1740.5 68.5 L1743.5 68.2 L1743 69.8 Z" fill="#4cba3c"/>
<text x="1778" y="69.5" font-size="17" font-weight="bold" fill="#000" stroke="#fff" stroke-width="1.4" paint-order="stroke" text-anchor="middle" font-family="Liberation Serif" textLength="15" lengthAdjust="spacingAndGlyphs">æ</text>
<path d="M1813.5 57.9 A6.6 6.6 0 1 0 1820.1 64.5 Q1817.5 64 1817.5 61.5 Q1814.5 61 1813.5 57.9 Z" fill="#a77a4f"/>
<circle cx="1810.5" cy="66.5" r="0.8" fill="#3d2a1a"/><circle cx="1816" cy="68.5" r="0.8" fill="#3d2a1a"/><circle cx="1812" cy="61.5" r="0.7" fill="#3d2a1a"/>
<defs><linearGradient id="ffg" x1="0.75" y1="0" x2="0.35" y2="1"><stop offset="0" stop-color="#fff36a"/><stop offset="0.45" stop-color="#ff9a3c"/><stop offset="0.8" stop-color="#f53a52"/><stop offset="1" stop-color="#d9236b"/></linearGradient></defs>
<path d="M21.9 14 Q23.2 16.6 25.4 18.6 Q27.9 21 27.8 23.6 A8 8 0 1 1 12.2 20.2 Q13 18 14.4 17.1 Q15.3 19 17 19.8 Q18.6 18.3 20.3 18.9 Q20.6 16 21.9 14 Z" fill="url(#ffg)"/>
<circle cx="19.9" cy="22.6" r="3.1" fill="#7a45dd"/>
<path d="M14.5 19.5 Q17 19.8 19.5 20.5 L17.2 22 Q15.5 21.5 14.5 19.5 Z" fill="#ffb14a"/>
<path d="M61.9 16 L68.2 22.3 L61.9 28.6 L55.6 22.3 Z" fill="#ffe400" stroke="#111" stroke-width="0.9"/>
<g fill="#d0021b"><rect x="55.5" y="20.6" width="2.3" height="3.4"/><rect x="58.4" y="20.2" width="2.3" height="3.8"/><rect x="61.3" y="19.6" width="1.6" height="4.4"/><rect x="63.4" y="20.2" width="2.4" height="3.8"/><rect x="66.4" y="19.8" width="2.3" height="4"/></g>

</svg>
</body></html>
